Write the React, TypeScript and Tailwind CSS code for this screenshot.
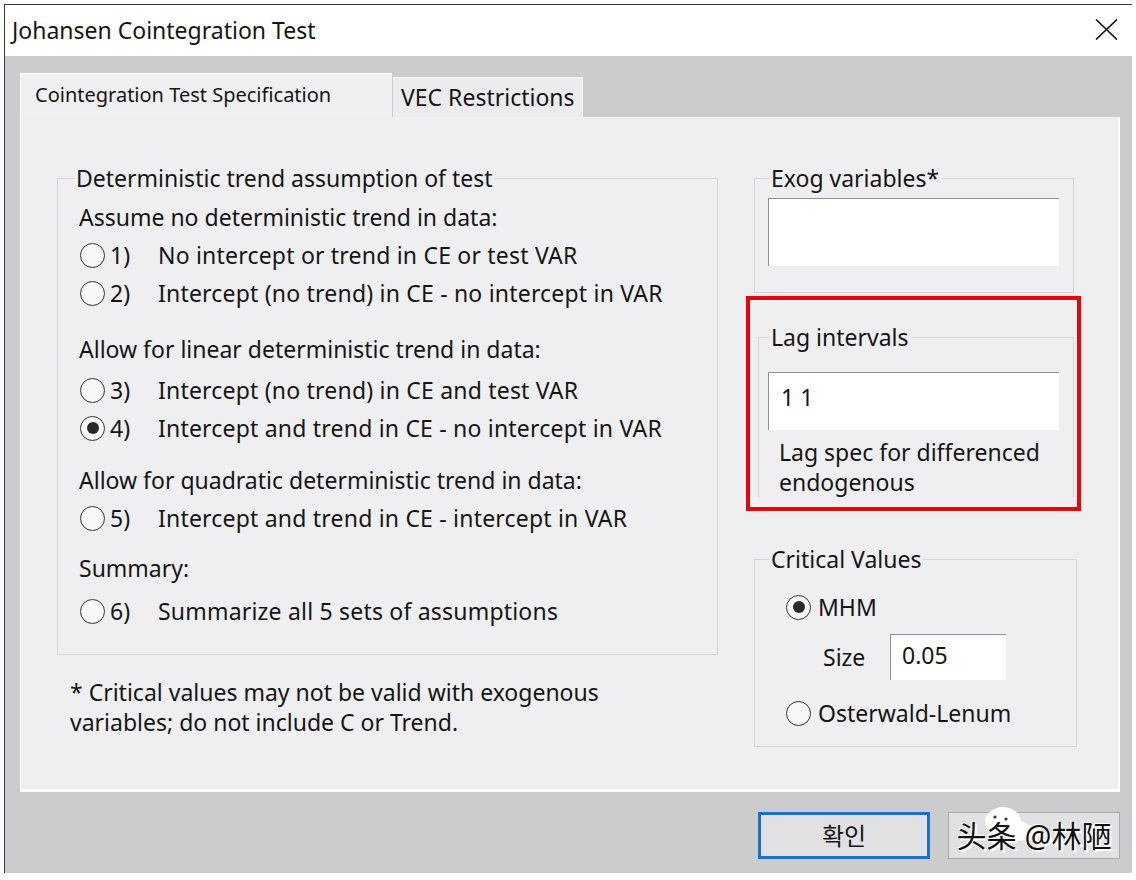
import type { ReactNode } from "react";

const FONT = { fontFamily: '"Noto Sans", "Noto Sans CJK KR", sans-serif' };

function Radio({ checked = false }: { checked?: boolean }) {
  return (
    <span className="flex h-[25px] w-[25px] shrink-0 items-center justify-center rounded-full border-[1.5px] border-[#333] bg-[#f7f7f8]">
      {checked && <span className="h-[12px] w-[12px] rounded-full bg-[#2a2a2a]" />}
    </span>
  );
}

function OptionRow({ num, label, checked, className = "" }: { num: string; label: string; checked?: boolean; className?: string }) {
  return (
    <div className={`flex h-[38px] items-center pl-[1px] ${className}`}>
      <Radio checked={checked} />
      <span className="ml-[5px] w-[48px]">{num}</span>
      <span className="tracking-[0.2px]">{label}</span>
    </div>
  );
}

function Group({
  title,
  className = "",
  legendClass = "-ml-[5px]",
  children
}: {
  title: string;
  className?: string;
  legendClass?: string;
  children: ReactNode;
}) {
  return (
    <fieldset className={`border border-[#d6d5d9] ${className}`}>
      <legend className={`px-[2px] text-[23px] leading-[30px] ${legendClass}`}>{title}</legend>
      {children}
    </fieldset>
  );
}

export default function App() {
  return (
    <div className="h-[880px] w-[1136px] bg-white pt-[4px] text-[#151515]" style={FONT}>
      <div className="ml-[4px] flex h-[869px] w-[1128px] flex-col border-l border-t border-[#3a3a3a]">
        {/* title bar */}
        <div className="flex h-[51px] shrink-0 items-center justify-between bg-white pl-[7px] pr-[14px]">
          <span className="text-[23px]">Johansen Cointegration Test</span>
          <svg width="23" height="21" viewBox="0 0 23 21" className="mb-[2px]">
            <path d="M1 0.5 L22 20.5 M22 0.5 L1 20.5" stroke="#111" strokeWidth="1.6" fill="none" />
          </svg>
        </div>

        {/* body */}
        <div className="flex flex-1 flex-col bg-[#cccbce] pl-[15px] pr-[12px] pt-[17px]">
          {/* tabs */}
          <div className="flex h-[44px] items-end">
            <div className="flex h-[44px] w-[372px] items-start border-l border-t border-white bg-[#f0eff2] pl-[14px] pt-[7px]">
              <span className="text-[20px] leading-[28px]">Cointegration Test Specification</span>
            </div>
            <div className="ml-[1px] flex h-[40px] w-[190px] items-center border-r border-t border-[#f4f4f5] bg-[#ecebee] pl-[8px]">
              <span className="text-[23px]">VEC Restrictions</span>
            </div>
          </div>

          {/* panel */}
          <div className="flex h-[675px] w-[1100px] border-b-[3px] border-l border-r-[2px] border-white bg-[#efeef1] pt-[46px]">
            {/* left column */}
            <div className="flex w-[697px] flex-col pl-[36px]">
              <Group title="Deterministic trend assumption of test" className="w-[661px] pb-[24px] pl-[21px] pt-[5px] text-[23px]">
                <div className="flex h-[38px] items-center">Assume no deterministic trend in data:</div>
                <OptionRow num="1)" label="No intercept or trend in CE or test VAR" />
                <OptionRow num="2)" label="Intercept (no trend) in CE - no intercept in VAR" />
                <div className="mt-[18px] flex h-[38px] items-center">Allow for linear deterministic trend in data:</div>
                <OptionRow num="3)" label="Intercept (no trend) in CE and test VAR" className="mt-[3px]" />
                <OptionRow num="4)" label="Intercept and trend in CE - no intercept in VAR" checked />
                <div className="mt-[14px] flex h-[38px] items-center">Allow for quadratic deterministic trend in data:</div>
                <OptionRow num="5)" label="Intercept and trend in CE - intercept in VAR" />
                <div className="mt-[12px] flex h-[38px] items-center">Summary:</div>
                <OptionRow num="6)" label="Summarize all 5 sets of assumptions" className="mt-[5px]" />
              </Group>
              <div className="mt-[22px] pl-[13px] text-[23px] leading-[30px]">
                <div>* Critical values may not be valid with exogenous</div>
                <div>variables; do not include C or Trend.</div>
              </div>
            </div>

            {/* right column */}
            <div className="flex w-[335px] flex-col pl-[28px]">
              <Group title="Exog variables*" className="ml-[8px] w-[320px] pb-[26px] pl-[13px] pt-[5px]" legendClass="ml-[1px]">
                <div className="h-[68px] w-[291px] border-l border-t border-[#8e8e90] bg-white" />
              </Group>

              <div className="mt-[3px] w-[335px] border-[4px] border-[#e3070d] pb-[10px] pl-[8px] pt-[22px]">
                <fieldset className="w-[316px] border border-b-0 border-[#d6d5d9] pl-[9px] pt-[20px]">
                  <legend className="ml-[1px] px-[2px] text-[23px] leading-[30px]">Lag intervals</legend>
                  <div className="flex h-[58px] w-[291px] items-center border-l border-t border-[#8e8e90] bg-white pb-[8px] pl-[12px] text-[23px]">
                    1 1
                  </div>
                  <div className="mt-[7px] pl-[11px] text-[23px] leading-[30px]">
                    <div>Lag spec for differenced</div>
                    <div>endogenous</div>
                  </div>
                </fieldset>
              </div>

              <Group
                title="Critical Values"
                className="ml-[8px] mt-[33px] w-[323px] pb-[18px] pl-[31px] pt-[18px] text-[23px]"
                legendClass="-ml-[17px]"
              >
                <div className="flex h-[30px] items-center">
                  <Radio checked />
                  <span className="ml-[7px]">MHM</span>
                </div>
                <div className="ml-[37px] mt-[12px] flex h-[46px] items-center">
                  <span className="w-[67px]">Size</span>
                  <div className="flex h-[46px] w-[116px] items-center border-l border-t border-[#8e8e90] bg-white pb-[4px] pl-[11px]">
                    0.05
                  </div>
                </div>
                <div className="mt-[18px] flex h-[30px] items-center">
                  <Radio />
                  <span className="ml-[7px]">Osterwald-Lenum</span>
                </div>
              </Group>
            </div>
          </div>

          {/* buttons */}
          <div className="mt-[20px] flex justify-end gap-[18px]">
            <button type="button" className="flex h-[47px] w-[172px] items-center justify-center border-[3px] border-[#1d6fc9] bg-[#e1e1e3] text-[24px]">
              확인
            </button>
            <button type="button" className="relative flex h-[47px] w-[172px] items-center justify-center border border-[#a9a9ab] bg-[#e1e1e3]">
              <svg width="52" height="40" viewBox="0 0 52 40" className="absolute -top-[8px] left-[32px]">
                <ellipse cx="22" cy="17" rx="18" ry="15" fill="#fff" />
                <ellipse cx="38" cy="26" rx="12" ry="10" fill="#fff" />
                <circle cx="14" cy="12" r="1.6" fill="#333" />
                <circle cx="25" cy="14" r="1.6" fill="#333" />
                <circle cx="20" cy="22" r="1.4" fill="#333" />
              </svg>
              <span
                className="relative text-[30px] leading-none text-[#111]"
                style={{ textShadow: "2px 2px 0 #fff, -1px -1px 0 #fff" }}
              >
                头条 @林陋
              </span>
            </button>
          </div>
        </div>
      </div>
    </div>
  );
}
